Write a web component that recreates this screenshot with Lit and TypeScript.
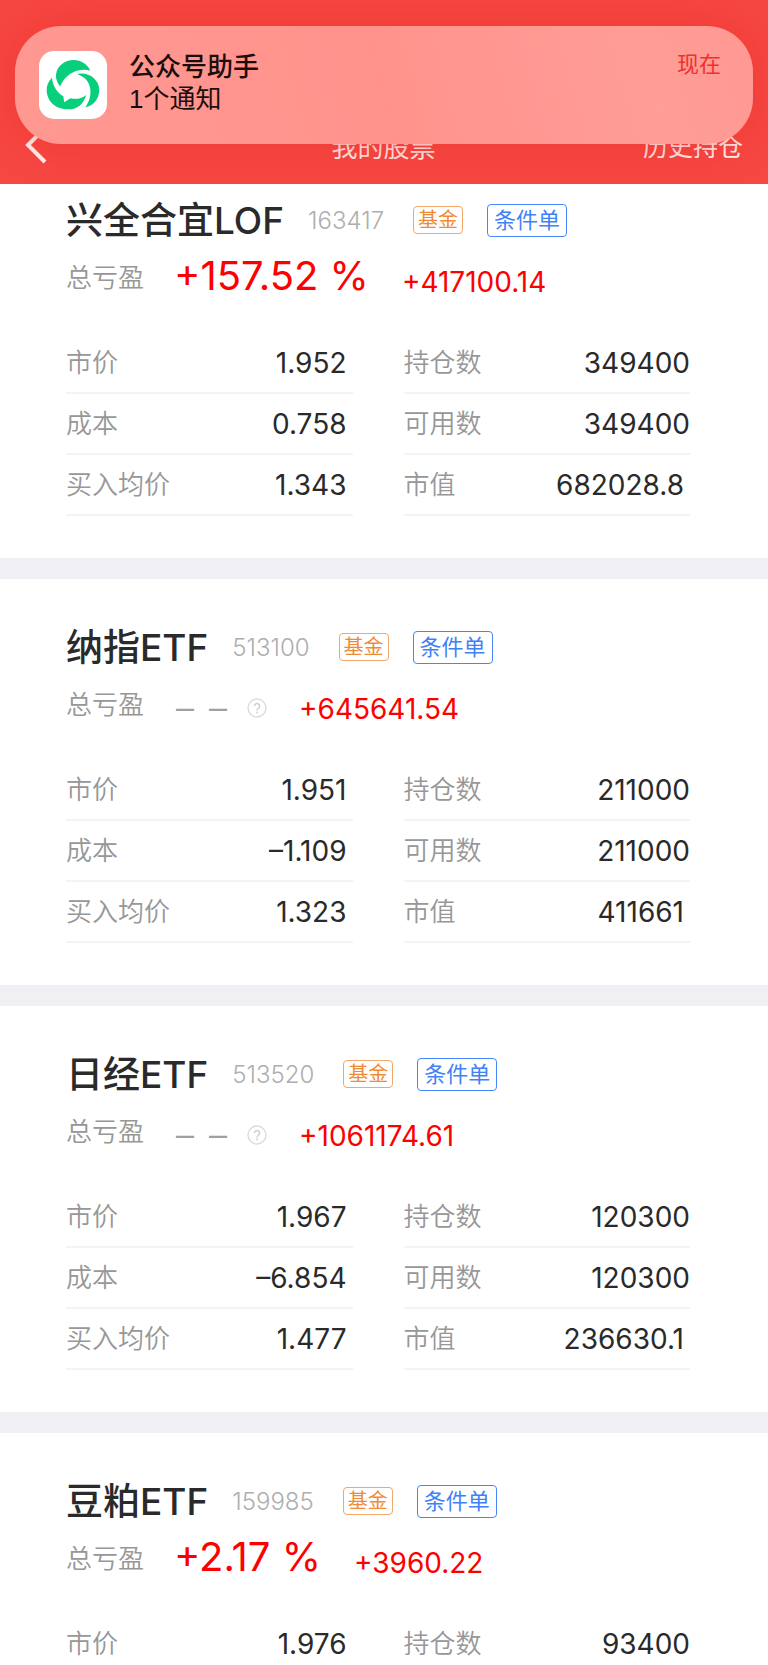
import { LitElement, html, css, svg, nothing } from "lit";
import { customElement, property } from "lit/decorators.js";
import { classMap } from "lit/directives/class-map.js";

interface Field {
  label: string;
  value: string;
}

interface Holding {
  name: string;
  code: string;
  percent?: string;
  profit: string;
  left: Field[];
  right: Field[];
}

const column = (labels: string[], values: string[]): Field[] =>
  values.map((value, i) => ({ label: labels[i], value }));

const LEFT = ["市价", "成本", "买入均价"];
const RIGHT = ["持仓数", "可用数", "市值"];

const HOLDINGS: Holding[] = [
  {
    name: "兴全合宜LOF",
    code: "163417",
    percent: "+157.52 %",
    profit: "+417100.14",
    left: column(LEFT, ["1.952", "0.758", "1.343"]),
    right: column(RIGHT, ["349400", "349400", "682028.8"]),
  },
  {
    name: "纳指ETF",
    code: "513100",
    profit: "+645641.54",
    left: column(LEFT, ["1.951", "–1.109", "1.323"]),
    right: column(RIGHT, ["211000", "211000", "411661"]),
  },
  {
    name: "日经ETF",
    code: "513520",
    profit: "+1061174.61",
    left: column(LEFT, ["1.967", "–6.854", "1.477"]),
    right: column(RIGHT, ["120300", "120300", "236630.1"]),
  },
  {
    name: "豆粕ETF",
    code: "159985",
    percent: "+2.17 %",
    profit: "+3960.22",
    left: column(LEFT, ["1.976"]),
    right: column(RIGHT, ["93400"]),
  },
];

const reset = css`
  * {
    box-sizing: border-box;
    margin: 0;
  }
  button {
    padding: 0;
    border: 0;
    background: none;
    font: inherit;
    color: inherit;
    cursor: pointer;
  }
`;

const helpIcon = svg`
  <circle cx="10" cy="10" r="9" fill="none" stroke="#dcdcdc" stroke-width="1.4" />
  <path d="M7.4 8a2.6 2.6 0 1 1 4.1 2.2c-1 .7-1.5 1.1-1.5 2.3" fill="none" stroke="#cdcdcd" stroke-width="1.4" />
  <circle cx="10" cy="14.4" r="0.9" fill="#cdcdcd" />`;

const assistantLogo = svg`
  <g fill="#07cf7c">
    <path d="M63 106C53 94 49 80 51 69C55 44 77 27 103 27C126 27 145 40 153 58C116 50 78 68 63 106Z" />
    <path d="M39 80C27 91 22 105 23 120C25 152 50 174 87 174C113 175 132 160 141 131C127 142 111 145 94 141L75 153L73 136C52 122 40 103 39 80Z" />
    <path d="M112 69C144 60 179 82 180 115C180 142 163 164 138 168C153 148 157 126 151 104C146 87 132 75 112 69Z" />
  </g>`;

@customElement("holding-card")
export class HoldingCard extends LitElement {
  @property({ attribute: false }) holding!: Holding;

  static styles = [
    reset,
    css`
      :host {
        display: block;
        padding: 45px 78px 42px 66px;
        background: #fff;
      }
      .heading {
        display: flex;
        align-items: center;
        height: 48px;
      }
      .name {
        font-size: 37px;
        font-weight: 500;
        line-height: 48px;
        color: #2a2a2a;
      }
      .code,
      .kind,
      .order {
        margin-bottom: 2px;
      }
      .code {
        margin-right: 29px;
        margin-left: 24px;
        font-size: 24px;
        font-weight: 300;
        color: #aeaeae;
      }
      .kind {
        padding: 0 4px;
        border: 1px solid #f3a869;
        border-radius: 4px;
        font-size: 20px;
        line-height: 26px;
        color: #ef8a35;
      }
      .order {
        margin-left: 24px;
        padding: 0 6px;
        border: 1px solid #4587fa;
        border-radius: 4px;
        font-size: 22px;
        line-height: 31px;
        color: #3f82f8;
      }
      .total {
        display: flex;
        align-items: flex-end;
        height: 60px;
      }
      .caption {
        width: 108px;
        font-size: 26px;
        font-weight: 350;
        line-height: 54px;
        color: #979797;
      }
      .percent {
        margin-right: 33px;
        font-size: 40px;
        line-height: 58px;
        color: #fe0000;
      }
      .unknown {
        display: flex;
        align-items: center;
        margin-right: 32px;
        padding-left: 2px;
        font-size: 36px;
        font-weight: 300;
        line-height: 48px;
        color: #a0a0a0;
      }
      .dashes {
        display: flex;
        gap: 15px;
      }
      .help {
        display: flex;
        margin-left: 20px;
      }
      .profit {
        font-size: 28px;
        line-height: 46px;
        color: #fe0000;
      }
      .columns {
        display: grid;
        grid-template-columns: 1fr 1fr;
        gap: 51px;
        margin-top: 28px;
      }
      .field {
        display: flex;
        align-items: center;
        justify-content: space-between;
        height: 61px;
        border-bottom: 2px solid #f4f4f4;
      }
      .label {
        padding-bottom: 4px;
        font-size: 26px;
        font-weight: 350;
        color: #979797;
      }
      .value {
        font-size: 28px;
        color: #2a2a2a;
      }
      .inset {
        padding-right: 6px;
      }
    `,
  ];

  private fields(items: Field[], insetAll: boolean) {
    return html`<dl>
      ${items.map(
        (f) => html`<div class="field">
          <dt class="label">${f.label}</dt>
          <dd class=${classMap({ value: true, inset: insetAll || f.label === "市值" })}>${f.value}</dd>
        </div>`,
      )}
    </dl>`;
  }

  render() {
    const h = this.holding;
    if (!h) return nothing;
    return html`
      <div class="heading">
        <h2 class="name">${h.name}</h2>
        <span class="code">${h.code}</span>
        <span class="kind">基金</span>
        <button class="order" type="button">条件单</button>
      </div>
      <div class="total">
        <span class="caption">总亏盈</span>
        ${h.percent
          ? html`<span class="percent">${h.percent}</span>`
          : html`<span class="unknown">
              <span class="dashes"><span>–</span><span>–</span></span>
              <button class="help" type="button" aria-label="说明">
                <svg width="20" height="20" viewBox="0 0 20 20">${helpIcon}</svg>
              </button>
            </span>`}
        <span class="profit">${h.profit}</span>
      </div>
      <div class="columns">${this.fields(h.left, true)} ${this.fields(h.right, false)}</div>
    `;
  }
}

@customElement("app-root")
export class AppRoot extends LitElement {
  static styles = [
    reset,
    css`
      :host {
        display: flex;
        flex-direction: column;
        height: 100vh;
        overflow: hidden;
        background: #fff;
        font-family: Inter, "Noto Sans CJK SC", sans-serif;
      }
      .top {
        position: relative;
        flex: none;
        padding: 107px 0 1px;
        overflow: hidden;
        background: #f64843;
      }
      .nav {
        display: grid;
        grid-template-columns: 1fr auto 1fr;
        align-items: center;
        height: 76px;
        padding: 0 25px 0 24px;
        font-size: 25px;
        color: #fff;
      }
      .back {
        display: flex;
        justify-self: start;
      }
      .title {
        font-size: 26px;
        font-weight: 400;
      }
      .history {
        justify-self: end;
        color: inherit;
        text-decoration: none;
      }
      .banner {
        position: absolute;
        top: 26px;
        left: 15px;
        right: 15px;
        display: flex;
        align-items: center;
        height: 118px;
        padding: 0 32px 0 24px;
        border-radius: 46px;
        background: linear-gradient(75deg, #ff9892 0%, #ff938c 50%, #ff9d97 85%, #ff9892 100%);
        box-shadow: 0 0 44px #ec2e28a0;
      }
      .logo {
        flex: none;
        border-radius: 15px;
        background: #fff;
      }
      .message {
        flex: 1;
        margin-left: 22px;
        padding-bottom: 5px;
        font-family: "Liberation Sans", "Noto Sans CJK SC", sans-serif;
        font-size: 26px;
        line-height: 32px;
        color: #1d0d0c;
      }
      .sender {
        font-weight: 500;
      }
      .time {
        align-self: flex-start;
        margin-top: 22px;
        font-size: 22px;
        line-height: 32px;
        color: #f0312b;
      }
      .list {
        flex: 1;
        overflow-y: auto;
        scrollbar-width: none;
        background: #efeff4;
      }
      .card + .card {
        margin-top: 21px;
      }
      .card:first-child {
        padding-top: 13px;
      }
    `,
  ];

  render() {
    return html`
      <header class="top">
        <nav class="nav">
          <button class="back" type="button" aria-label="返回">
            <svg width="24" height="38" viewBox="0 0 24 38">
              <path d="M21 2L4 19L21 36" fill="none" stroke="#fff" stroke-width="4" />
            </svg>
          </button>
          <h1 class="title">我的股票</h1>
          <a class="history" href="#history">历史持仓</a>
        </nav>
        <div class="banner" role="status">
          <svg class="logo" width="68" height="68" viewBox="0 0 203 203">${assistantLogo}</svg>
          <div class="message">
            <p class="sender">公众号助手</p>
            <p>1个通知</p>
          </div>
          <span class="time">现在</span>
        </div>
      </header>
      <main class="list">
        ${HOLDINGS.map((h) => html`<holding-card class="card" .holding=${h}></holding-card>`)}
      </main>
    `;
  }
}
